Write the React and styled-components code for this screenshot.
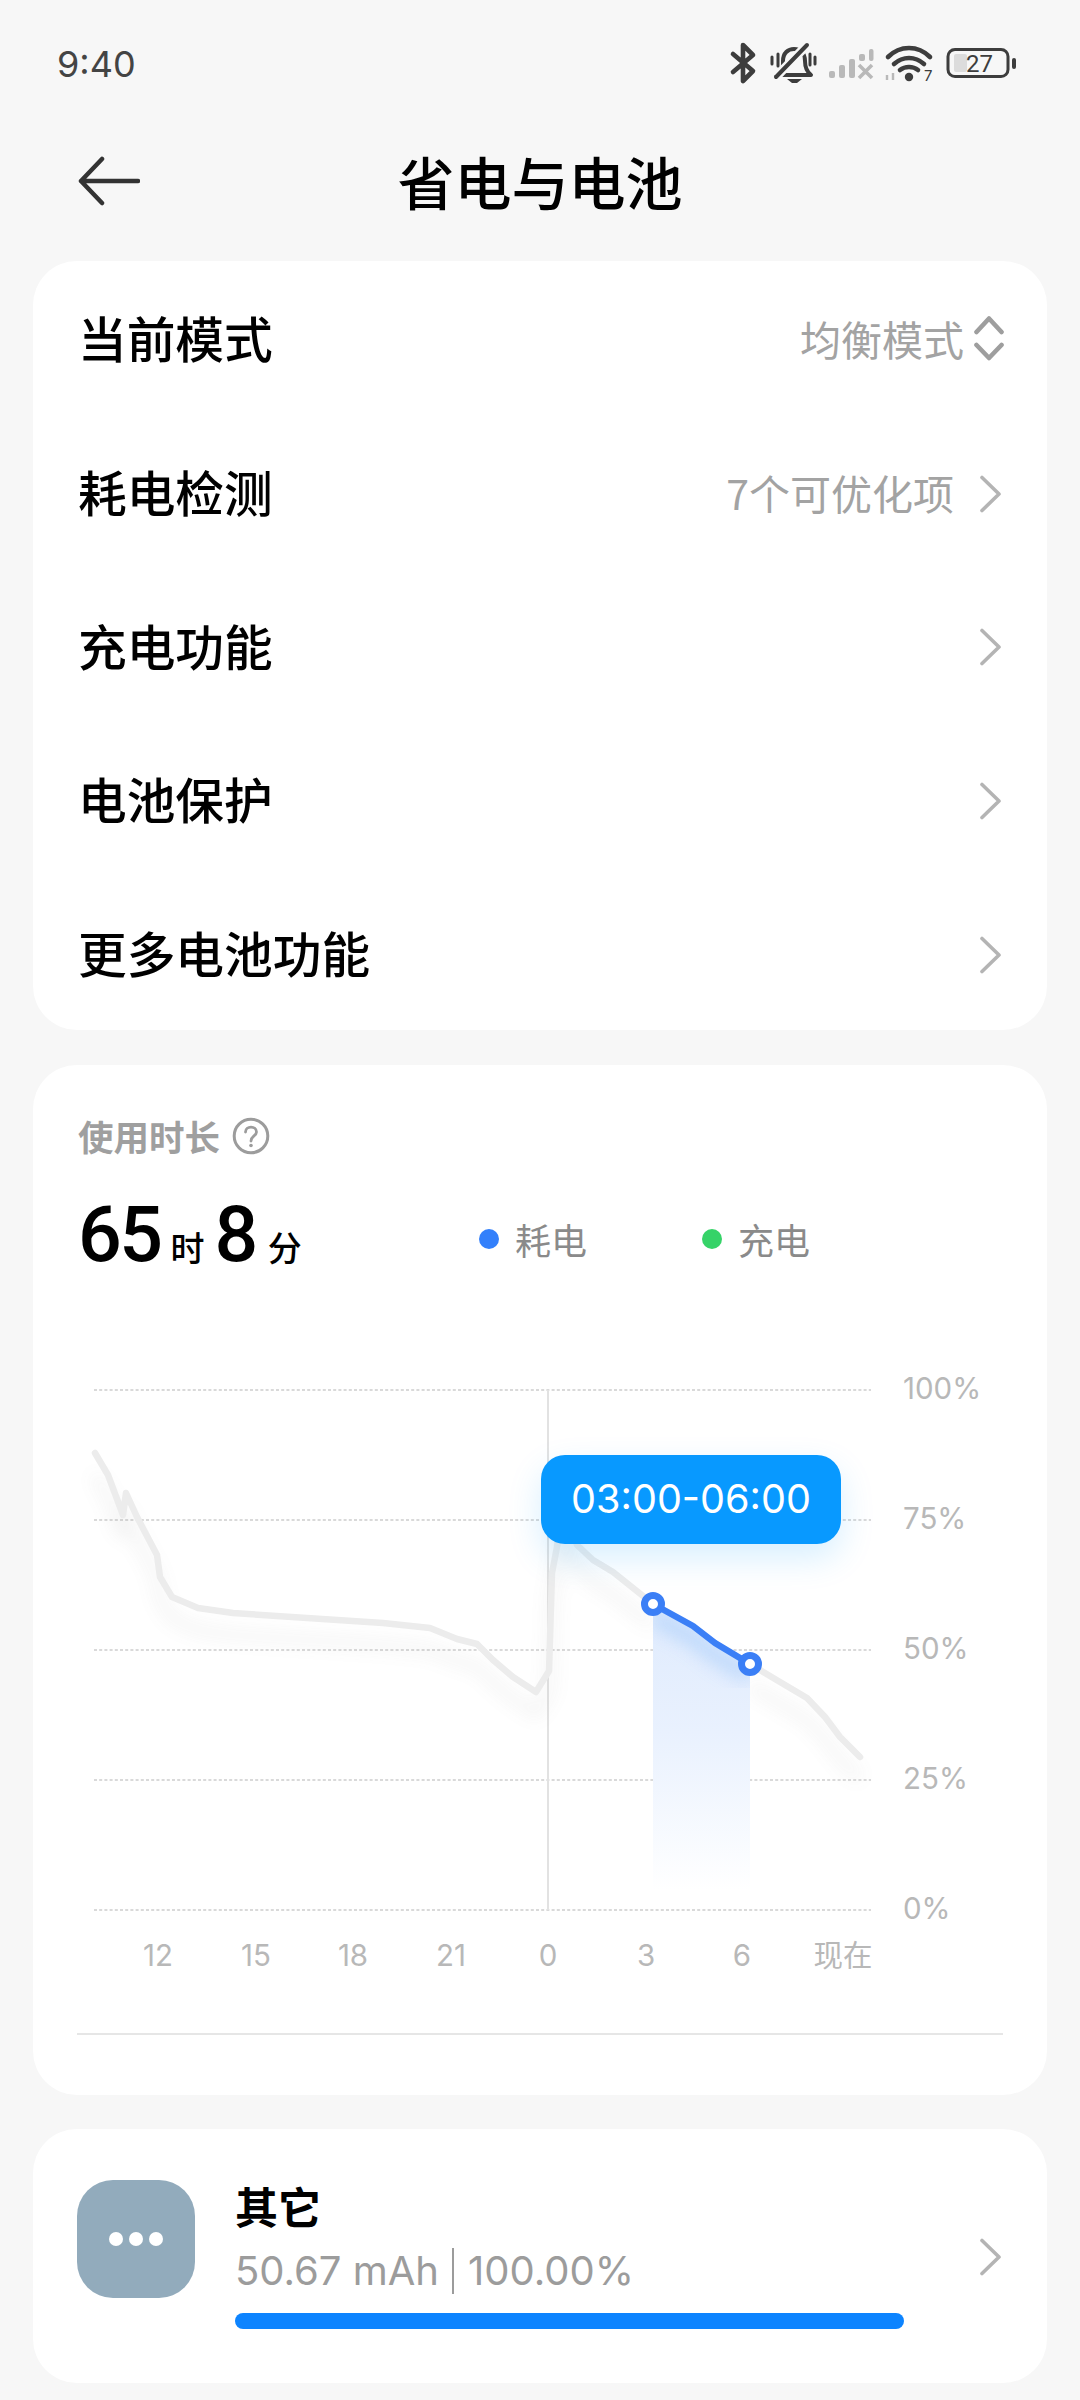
import React from "react";
import styled, { createGlobalStyle } from "styled-components";

const CJK = `"Noto Sans CJK SC", "Noto Sans", sans-serif`;
const LATIN = `Inter, "Noto Sans CJK SC", sans-serif`;
const NUM = `Roboto, "Noto Sans CJK SC", sans-serif`;

const Global = createGlobalStyle`
  html, body { margin: 0; padding: 0; background: #f7f7f7; }
  * { box-sizing: border-box; }
  body { font-family: ${CJK}; width: 1080px; height: 2400px; overflow: hidden; }
`;

const Page = styled.div`
  width: 1080px;
  height: 2400px;
  background: #f7f7f7;
  overflow: hidden;
`;

const StatusBar = styled.div`
  height: 128px;
  padding: 0 61px 0 57px;
  display: flex;
  align-items: center;
  justify-content: space-between;
`;

const Time = styled.span`
  font: 400 36px/1 ${LATIN};
  color: #444;
`;

const Header = styled.header`
  height: 110px;
  margin-bottom: 23px;
  padding: 0 78px 6px;
  position: relative;
  display: flex;
  align-items: center;
  justify-content: center;
`;

const BackButton = styled.span`
  position: absolute;
  left: 78px;
  top: 28px;
  display: flex;
`;

const Title = styled.h1`
  margin: 0;
  font: 500 57px/1 ${CJK};
  color: #000;
`;

const Cards = styled.div`
  padding: 0 33px;
  display: flex;
  flex-direction: column;
  gap: 35px;
`;

const Card = styled.section`
  width: 1014px;
  background: #fff;
  border-radius: 44px;
`;

const MenuCard = styled(Card)`
  height: 769px;
  padding: 2px 45px 0;
  display: flex;
  flex-direction: column;
`;

const Row = styled.div`
  height: 153.8px;
  display: flex;
  flex: none;
  align-items: center;
  justify-content: space-between;
`;

const RowLabel = styled.span`
  font: 500 48.7px/1 ${CJK};
  color: #000;
  padding-bottom: 5px;
`;

const RowRight = styled.span`
  display: flex;
  align-items: center;
  gap: ${(p) => p.$gap}px;
  margin-right: ${(p) => p.$shift}px;
`;

const RowValue = styled.span`
  font: 400 41px/1 ${CJK};
  color: #a3a3a3;
  padding-bottom: 2px;
`;

const UsageCard = styled(Card)`
  height: 1030px;
  padding-top: 49px;
`;

const UsageHead = styled.div`
  height: 44px;
  padding-left: 45px;
  display: flex;
  align-items: center;
  gap: 12px;
`;

const UsageTitle = styled.span`
  font: 700 35.5px/1 ${CJK};
  color: #9f9f9f;
`;

const Summary = styled.div`
  margin-top: 37px;
  height: 80px;
  padding-left: 45px;
  display: grid;
  grid-template-columns: 401px 223px 223px;
  align-items: center;
`;

const Duration = styled.div`
  display: flex;
  align-items: baseline;
`;

const Big = styled.span`
  font: 500 77px/80px ${NUM};
  color: #000;
  letter-spacing: -2.5px;
`;

const Unit = styled.span`
  font: 500 34px/1 ${CJK};
  color: #000;
  margin: 0 ${(p) => p.$right || 0}px 0 ${(p) => p.$left || 0}px;
`;

const LegendItem = styled.div`
  display: flex;
  align-items: center;
  gap: 16px;
  padding-top: 7px;
  font: 400 36px/1 ${CJK};
  color: #8a8a8a;
`;

const Dot = styled.i`
  width: 20px;
  height: 20px;
  border-radius: 50%;
  background: ${(p) => p.$color};
`;

const Chart = styled.div`
  margin-top: 95px;
  height: 610px;
  position: relative;
`;

const ChartSvg = styled.svg`
  display: block;
  width: 1014px;
  height: 610px;
`;

const AxisText = styled.text`
  font: 400 29.5px ${LATIN};
  fill: #b8b8b8;
`;

const Tip = styled.div`
  position: absolute;
  left: 508px;
  top: 85px;
  width: 300px;
  height: 89px;
  border-radius: 24px;
  background: #0899ff;
  color: #fff;
  font: 400 39.6px/89px ${LATIN};
  text-align: center;
  box-shadow: 0 14px 34px rgba(8, 153, 255, 0.16);
`;

const Divider = styled.hr`
  margin: 53px 44px 0;
  border: 0;
  height: 2px;
  background: #e6e6e6;
`;

const AppCard = styled(Card)`
  height: 254px;
  margin-top: -1px;
  padding: 51px 45px 0 44px;
  display: grid;
  grid-template-columns: 118px 1fr 24px;
  column-gap: 40px;
`;

const AppIcon = styled.div`
  width: 118px;
  height: 118px;
  border-radius: 36px;
  background: #92abbc;
  display: flex;
  align-items: center;
  justify-content: center;
  gap: 6px;
`;

const AppDot = styled.i`
  width: 14px;
  height: 14px;
  border-radius: 50%;
  background: #fff;
`;

const AppInfo = styled.div`
  display: flex;
  flex-direction: column;
`;

const AppName = styled.span`
  margin-top: -3px;
  font: 700 43px/56px ${CJK};
  color: #000;
`;

const AppStat = styled.span`
  margin-top: 10px;
  height: 56px;
  display: flex;
  align-items: center;
  font: 400 40px/56px ${LATIN};
  color: #9c9c9c;
`;

const StatSep = styled.i`
  width: 2px;
  height: 46px;
  margin: 0 14px 0 13px;
  background: #9c9c9c;
`;

const Bar = styled.div`
  margin-top: 14px;
  width: 669px;
  height: 16px;
  border-radius: 8px;
  background: #0d84ff;
`;

const ChevronSlot = styled.div`
  align-self: start;
  margin-top: 58px;
`;

const Chevron = () => (
  <svg width="24" height="38" viewBox="0 0 24 38" fill="none">
    <path d="M4 2.5 L21 19 L4 35.5" stroke="#b4b4b4" strokeWidth="3.6" strokeLinecap="round" strokeLinejoin="round" />
  </svg>
);

const UpDown = () => (
  <svg width="30" height="50" viewBox="0 0 30 50" fill="none">
    <path d="M2.5 17 L15 3.5 L27.5 17 M2.5 30 L15 43 L27.5 30" stroke="#9e9e9e" strokeWidth="4.6" strokeLinecap="round" strokeLinejoin="round" />
  </svg>
);

const Back = () => (
  <svg width="62" height="50" viewBox="0 0 62 50" fill="none">
    <path d="M24 3 L3 25 L24 47 M3 25 H60" stroke="#333" strokeWidth="4.5" strokeLinecap="round" strokeLinejoin="round" />
  </svg>
);

const StatusIcons = () => (
  <svg width="290" height="44" viewBox="729 43 290 44" fill="none">
    <path d="M733 55 L753 72 L743 82 V46 L753 56 L733 73" stroke="#3d3d3d" strokeWidth="4.6" strokeLinecap="round" strokeLinejoin="round" />
    <path d="M779 75 C784 71 783 66 783 62 C783 54 788 50 794 50 C801 50 805 55 805 62 C805 67 806 72 811 76 H776 Z" stroke="#3d3d3d" strokeWidth="4" strokeLinejoin="round" />
    <path d="M776 78 L807 46" stroke="#f7f7f7" strokeWidth="9" />
    <path d="M776 78 L807 46" stroke="#3d3d3d" strokeWidth="4" strokeLinecap="round" />
    <path d="M787 80 H802 L797 84 H792 Z" fill="#3d3d3d" />
    <path d="M772 58 V65 M778 55 V67 M810 55 V66 M815 58 V65" stroke="#3d3d3d" strokeWidth="3" strokeLinecap="round" />
    <g fill="#b9b9b9">
      <rect x="829" y="72" width="6" height="7" rx="2" />
      <rect x="839" y="66" width="6" height="13" rx="2" />
      <rect x="849" y="60" width="6" height="19" rx="2" />
      <rect x="859" y="55" width="6" height="7" rx="2" />
      <rect x="869" y="50" width="4.5" height="12" rx="2" />
    </g>
    <path d="M859 66 L872 79 M872 66 L859 79" stroke="#b9b9b9" strokeWidth="3.6" />
    <path d="M888 58 C900 46 918 46 930 58 M894 65 C903 57 915 57 924 65 M900 71 C905 67 913 67 918 71" stroke="#3d3d3d" strokeWidth="4.6" strokeLinecap="round" />
    <circle cx="909" cy="78" r="4.2" fill="#3d3d3d" />
    <path d="M887 76 V81 M893 74 V81" stroke="#b9b9b9" strokeWidth="2.4" />
    <text x="924" y="82" style={{ font: "400 15px Inter, sans-serif", fill: "#3d3d3d" }}>7</text>
    <rect x="948" y="50.5" width="60" height="27" rx="7" stroke="#3d3d3d" strokeWidth="3" />
    <rect x="954" y="55" width="13" height="18" rx="2" fill="#dcdcdc" />
    <text x="966" y="73" style={{ font: "400 24px Roboto, sans-serif", fill: "#3d3d3d" }}>27</text>
    <rect x="1012" y="59" width="4" height="11" rx="2" fill="#3d3d3d" />
  </svg>
);

const Question = () => (
  <svg width="38" height="38" viewBox="0 0 38 38" fill="none">
    <circle cx="19" cy="19" r="16.8" stroke="#9c9c9c" strokeWidth="3" />
    <path d="M13.5 15 C13.5 8.5 24.5 8.5 24.5 15 C24.5 19 19 19 19 24" stroke="#9c9c9c" strokeWidth="2.8" strokeLinecap="round" />
    <circle cx="19" cy="28.5" r="1.8" fill="#9c9c9c" />
  </svg>
);

const GRID = [1390, 1520, 1650, 1780, 1910];
const YLABELS = ["100%", "75%", "50%", "25%", "0%"];
const XLABELS = [[158, "12"], [256, "15"], [353, "18"], [451, "21"], [548, "0"], [646, "3"], [742, "6"], [843, "现在"]];

const LINE_A = "95,1453 108,1475 123,1515 126,1493 137,1517 157,1555 160,1577 172,1597 198,1608 233,1613 383,1623 430,1628 457,1639 477,1644 493,1660 513,1677 536,1692 549,1671 552,1573 557,1547 562,1500 577,1545 593,1560 613,1572 653,1604";
const LINE_B = "750,1664 780,1682 807,1698 825,1717 840,1737 860,1757";
const LINE_BLUE = "653,1604 693,1626 715,1643 750,1664";
const AREA = "653,1604 693,1626 715,1643 750,1664 750,1890 653,1890";

const BatteryChart = () => (
  <ChartSvg viewBox="33 1370 1014 610">
    <defs>
      <linearGradient id="areaFill" x1="0" y1="0" x2="0" y2="1">
        <stop offset="0" stopColor="#dfebfd" />
        <stop offset="0.45" stopColor="#e9f1fe" />
        <stop offset="1" stopColor="#ffffff" />
      </linearGradient>
      <filter id="soft" x="-10%" y="-10%" width="120%" height="130%">
        <feGaussianBlur stdDeviation="9" />
      </filter>
      <clipPath id="areaClip">
        <polygon points={AREA} />
      </clipPath>
    </defs>
    {GRID.map((y) => (
      <line key={y} x1="94" x2="871" y1={y} y2={y} stroke="#d9d9d9" strokeWidth="2" strokeDasharray="3 2.2" />
    ))}
    <line x1="548" x2="548" y1="1390" y2="1910" stroke="#e2e2e2" strokeWidth="2" />
    {YLABELS.map((t, i) => (
      <AxisText key={t} x="903" y={GRID[i] + 9}>{t}</AxisText>
    ))}
    {XLABELS.map(([x, t]) => (
      <AxisText key={t} x={x} y="1966" textAnchor="middle">{t}</AxisText>
    ))}
    <g transform="translate(0 22)" filter="url(#soft)" opacity="0.1">
      <polyline points={LINE_A} fill="none" stroke="#777" strokeWidth="8" />
      <polyline points={LINE_B} fill="none" stroke="#777" strokeWidth="8" />
    </g>
    <polyline points={LINE_A} fill="none" stroke="#ececec" strokeWidth="6.5" strokeLinecap="round" strokeLinejoin="round" />
    <polyline points={LINE_B} fill="none" stroke="#ececec" strokeWidth="6.5" strokeLinecap="round" strokeLinejoin="round" />
    <polygon points={AREA} fill="url(#areaFill)" />
    <g clipPath="url(#areaClip)">
      <polyline points={LINE_BLUE} transform="translate(0 12)" fill="none" stroke="#a9cdfa" strokeWidth="14" filter="url(#soft)" opacity="0.75" />
    </g>
    <polyline points={LINE_BLUE} fill="none" stroke="#3b7ff6" strokeWidth="6.5" strokeLinecap="round" strokeLinejoin="round" />
    <circle cx="653" cy="1604" r="8.5" fill="#fff" stroke="#3b7ff6" strokeWidth="7" />
    <circle cx="750" cy="1664" r="8.5" fill="#fff" stroke="#3b7ff6" strokeWidth="7" />
  </ChartSvg>
);

const MENU = [
  { label: "当前模式", value: "均衡模式", updown: true },
  { label: "耗电检测", value: "7个可优化项" },
  { label: "充电功能" },
  { label: "电池保护" },
  { label: "更多电池功能" },
];

export default function App() {
  return (
    <Page>
      <Global />
      <StatusBar>
        <Time>9:40</Time>
        <StatusIcons />
      </StatusBar>
      <Header>
        <BackButton><Back /></BackButton>
        <Title>省电与电池</Title>
      </Header>
      <Cards>
        <MenuCard>
          {MENU.map((m) => (
            <Row key={m.label}>
              <RowLabel>{m.label}</RowLabel>
              <RowRight $gap={m.updown ? 10 : 24} $shift={m.updown ? -2 : 0}>
                {m.value && <RowValue>{m.value}</RowValue>}
                {m.updown ? <UpDown /> : <Chevron />}
              </RowRight>
            </Row>
          ))}
        </MenuCard>
        <UsageCard>
          <UsageHead>
            <UsageTitle>使用时长</UsageTitle>
            <Question />
          </UsageHead>
          <Summary>
            <Duration>
              <Big>65</Big>
              <Unit $left={10} $right={10}>时</Unit>
              <Big>8</Big>
              <Unit $left={12}>分</Unit>
            </Duration>
            <LegendItem><Dot $color="#3380fb" />耗电</LegendItem>
            <LegendItem><Dot $color="#36d368" />充电</LegendItem>
          </Summary>
          <Chart>
            <BatteryChart />
            <Tip>03:00-06:00</Tip>
          </Chart>
          <Divider />
        </UsageCard>
        <AppCard>
          <AppIcon>
            <AppDot /><AppDot /><AppDot />
          </AppIcon>
          <AppInfo>
            <AppName>其它</AppName>
            <AppStat>50.67 mAh<StatSep />100.00%</AppStat>
            <Bar />
          </AppInfo>
          <ChevronSlot><Chevron /></ChevronSlot>
        </AppCard>
      </Cards>
    </Page>
  );
}
